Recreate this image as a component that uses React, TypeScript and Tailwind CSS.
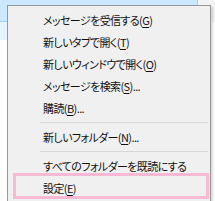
const items: ({ label: string; key: string; after?: string } | 'sep')[] = [
  { label: 'メッセージを受信する(', key: 'G', after: ')' },
  { label: '新しいタブで開く(', key: 'T', after: ')' },
  { label: '新しいウィンドウで開く(', key: 'O', after: ')' },
  { label: 'メッセージを検索(', key: 'S', after: ')...' },
  { label: '購読(', key: 'B', after: ')...' },
  'sep',
  { label: '新しいフォルダー(', key: 'N', after: ')...' },
  'sep',
  { label: 'すべてのフォルダーを既読にする', key: '' },
  { label: '設定(', key: 'E', after: ')' },
];

export default function App() {
  return (
    <div className="relative w-[215px] h-[201px] overflow-hidden bg-white font-['Meiryo_UI','Noto_Sans_CJK_JP',sans-serif]">
      {/* background window behind the menu */}
      <div className="flex">
        <div className="w-[198px] h-[22px] bg-[#cce8ff] border-b border-r border-[#99d1ff]" />
        <div className="flex-1 h-[22px] bg-[#f3f3f3]" />
      </div>
      <div className="w-[8px] h-[18px] bg-[#e5f3ff] border-r border-[#99d1ff]" />

      {/* context menu */}
      <div className="absolute left-[7px] top-[5px] w-[204px] h-[210px] bg-[#f0f0f0] border border-[#979797] shadow-[2px_2px_2px_rgba(0,0,0,0.15)] pt-[3px] text-[11px] tracking-[-0.6px] text-[#111] [font-feature-settings:'palt']">
        {items.map((it, i) =>
          it === 'sep' ? (
            <div key={i} className="h-[7px] flex items-center pl-[32px] pr-[2px]">
              <div className="w-full h-px bg-[#d7d7d7]" />
            </div>
          ) : (
            <div key={i} className="h-[22px] flex items-center pl-[35px] leading-none whitespace-nowrap">
              {it.label}
              {it.key && <span className="underline underline-offset-2">{it.key}</span>}
              {it.after}
            </div>
          )
        )}
      </div>

      {/* highlight annotation */}
      <div className="absolute left-[13px] top-[173px] w-[196px] h-[26px] border-[3px] border-[#f7b9d3]" />
    </div>
  );
}
